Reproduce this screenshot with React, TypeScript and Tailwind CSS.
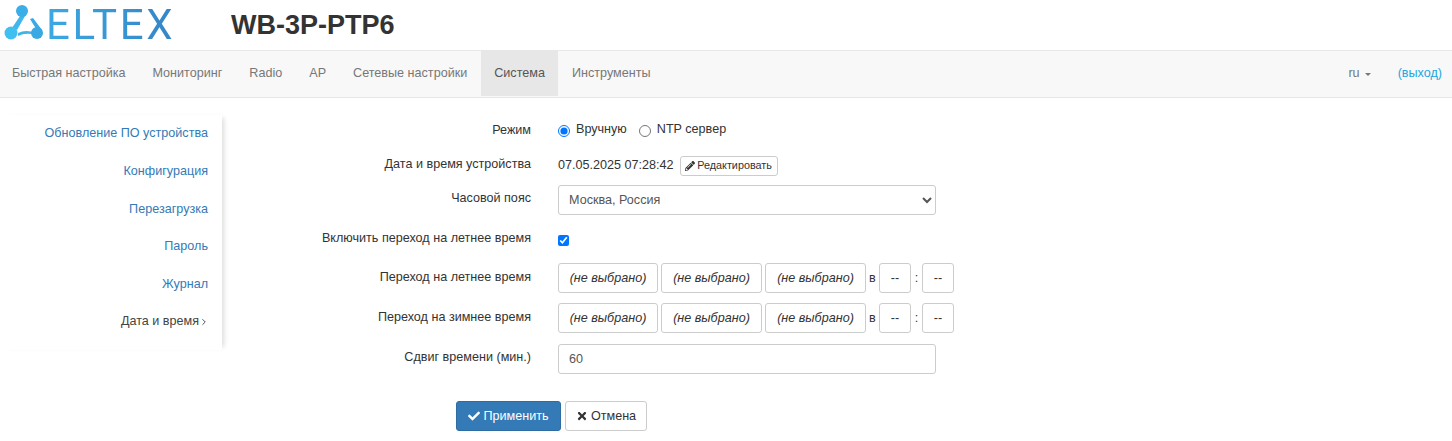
import React from 'react'
import { ChevronRight } from 'lucide-react'
import { FaCheck, FaPencilAlt, FaTimes } from 'react-icons/fa'

const navItems = ['Быстрая настройка', 'Мониторинг', 'Radio', 'AP', 'Сетевые настройки', 'Система', 'Инструменты']
const sideItems = ['Обновление ПО устройства', 'Конфигурация', 'Перезагрузка', 'Пароль', 'Журнал']

const Logo = () => (
  <div className="w-[227px] flex items-start">
    <svg width="44" height="44" viewBox="0 0 44 44" className="shrink-0">
      <path d="M18 13 L21 16 L13 30 L8 28 Z" fill="#3fb6ec" />
      <path d="M26 19 L29 18 L38 30 L34 32 Z" fill="#3aa9e4" />
      <path d="M14 33 Q22 29 32 33 L32 35 Q22 32 14 36 Z" fill="#3fb4ea" />
      <circle cx="18" cy="11" r="6" fill="#3aaee8" />
      <circle cx="7" cy="33" r="6.5" fill="#3fc0f0" />
      <circle cx="33" cy="33" r="6" fill="#3aa8e2" />
    </svg>
    <span className="-ml-[2px] text-[42px] leading-[50px] tracking-[2.6px] font-['Roboto',sans-serif] font-normal text-transparent bg-clip-text bg-gradient-to-r from-[#3ba9e4] to-[#3585c5]">
      ELTEX
    </span>
  </div>
)

const Picker = ({ w = 'w-[100px]' }: { w?: string }) => (
  <div className={`${w} h-[30px] flex items-center justify-center border border-[#ccc] rounded-[3px] italic text-[#333] bg-white`}>
    (не выбрано)
  </div>
)

const Small = () => (
  <div className="w-8 h-[30px] flex items-center justify-center border border-[#ccc] rounded-[3px] text-[#333] bg-white">--</div>
)

const DateLine = () => (
  <div className="flex items-center">
    <Picker />
    <div className="w-[3px]" />
    <Picker w="w-[101px]" />
    <div className="w-[3px]" />
    <Picker w="w-[101px]" />
    <span className="ml-[3px] w-[10px] text-[#333]">в</span>
    <Small />
    <span className="w-[11px] text-center text-[#333]">:</span>
    <Small />
  </div>
)

const Row = ({
  label,
  className,
  labelClass = 'pb-1',
  children,
}: {
  label: string
  className: string
  labelClass?: string
  children: React.ReactNode
}) => (
  <div className={`flex items-center ${className}`}>
    <div className={`w-[336px] pr-[27px] text-right text-[#333] ${labelClass}`}>{label}</div>
    {children}
  </div>
)

export default function App() {
  return (
    <div className="w-[1452px] h-[441px] overflow-hidden bg-white font-['Liberation_Sans',Arial,sans-serif] text-[12.6px]">
      <header className="h-[50px] flex pl-[4px]">
        <Logo />
        <h1 className="mt-[7px] text-[27px] leading-[36px] font-bold text-[#333]">WB-3P-PTP6</h1>
      </header>
      <nav className="h-[48px] flex items-start bg-[#f8f8f8] border-y border-[#e7e7e7] text-[#777]">
        <div className="flex -ml-[1.6px]">
          {navItems.map((item) => (
            <div
              key={item}
              className={`h-[45px] px-[13.5px] flex items-center ${item === 'Система' ? 'bg-[#e7e7e7] text-[#555]' : ''}`}
            >
              {item}
            </div>
          ))}
        </div>
        <div className="ml-auto h-[45px] flex items-center pr-[10px]">
          <span>ru</span>
          <span className="ml-[5px] mt-[1px] w-0 h-0 border-x-[3px] border-x-transparent border-t-[3px] border-t-[#777]" />
          <span className="ml-[27px] text-[#23a7e0]">(выход)</span>
        </div>
      </nav>
      <main className="flex">
        <aside className="w-[222px] h-[235px] mt-[17px] pr-[14px] bg-white text-right shadow-[5px_0_5px_-3px_rgba(0,0,0,0.14)] text-[#337ab7]">
          {sideItems.map((item) => (
            <div key={item} className="h-[37.6px] flex items-center justify-end">
              {item}
            </div>
          ))}
          <div className="h-[37.6px] flex items-center justify-end text-[#444]">
            Дата и время
            <ChevronRight size={10} strokeWidth={2.2} className="-mr-[1px]" />
          </div>
        </aside>
        <form className="pt-[17px]">
          <Row label="Режим" labelClass="" className="h-[30px]">
            <label className="flex items-center text-[#333]">
              <input type="radio" name="mode" defaultChecked className="w-[12px] h-[12px] mt-[2px] accent-[#0075ff]" />
              <span className="ml-[6px] -mt-[1px]">Вручную</span>
            </label>
            <label className="flex items-center ml-[12px] text-[#333]">
              <input type="radio" name="mode" className="w-[12px] h-[12px] mt-[2px]" />
              <span className="ml-[6px] -mt-[1px]">NTP сервер</span>
            </label>
          </Row>
          <Row label="Дата и время устройства" labelClass="pb-[2px]" className="h-[30px] mt-[5px]">
            <span className="text-[#333]">07.05.2025 07:28:42</span>
            <button type="button" className="ml-[6px] mt-[1px] h-[20px] w-[98px] flex items-center justify-center border border-[#ccc] rounded-[3px] text-[10.8px] text-[#333] bg-white">
              <FaPencilAlt className="text-[10px] mr-[2px]" />
              Редактировать
            </button>
          </Row>
          <Row label="Часовой пояс" className="h-[30px] mt-[5px]">
            <select className="w-[378px] h-[30px] px-[6px] border border-[#ccc] rounded-[3px] bg-white text-[#555]">
              <option>Москва, Россия</option>
            </select>
          </Row>
          <Row label="Включить переход на летнее время" className="h-[30px] mt-[10px]">
            <input type="checkbox" defaultChecked className="w-[11px] h-[11px] accent-[#0075ff]" />
          </Row>
          <Row label="Переход на летнее время" labelClass="pb-[2px]" className="h-[30px] mt-[8px]">
            <DateLine />
          </Row>
          <Row label="Переход на зимнее время" labelClass="pb-[2px]" className="h-[30px] mt-[10px]">
            <DateLine />
          </Row>
          <Row label="Сдвиг времени (мин.)" className="h-[30px] mt-[11px]">
            <input defaultValue="60" className="w-[378px] h-[30px] px-[10px] border border-[#ccc] rounded-[3px] text-[#555]" />
          </Row>
          <div className="flex mt-[27px] ml-[234px]">
            <button type="button" className="w-[105px] h-[30px] flex items-center justify-center rounded-[3px] border border-[#2e6da4] bg-[#337ab7] text-white">
              <FaCheck className="text-[12px] mr-[3px]" />
              Применить
            </button>
            <button type="button" className="ml-1 w-[82px] h-[30px] flex items-center justify-center rounded-[3px] border border-[#ccc] bg-white text-[#333]">
              <FaTimes className="text-[12px] mr-[3px]" />
              Отмена
            </button>
          </div>
        </form>
      </main>
    </div>
  )
}
